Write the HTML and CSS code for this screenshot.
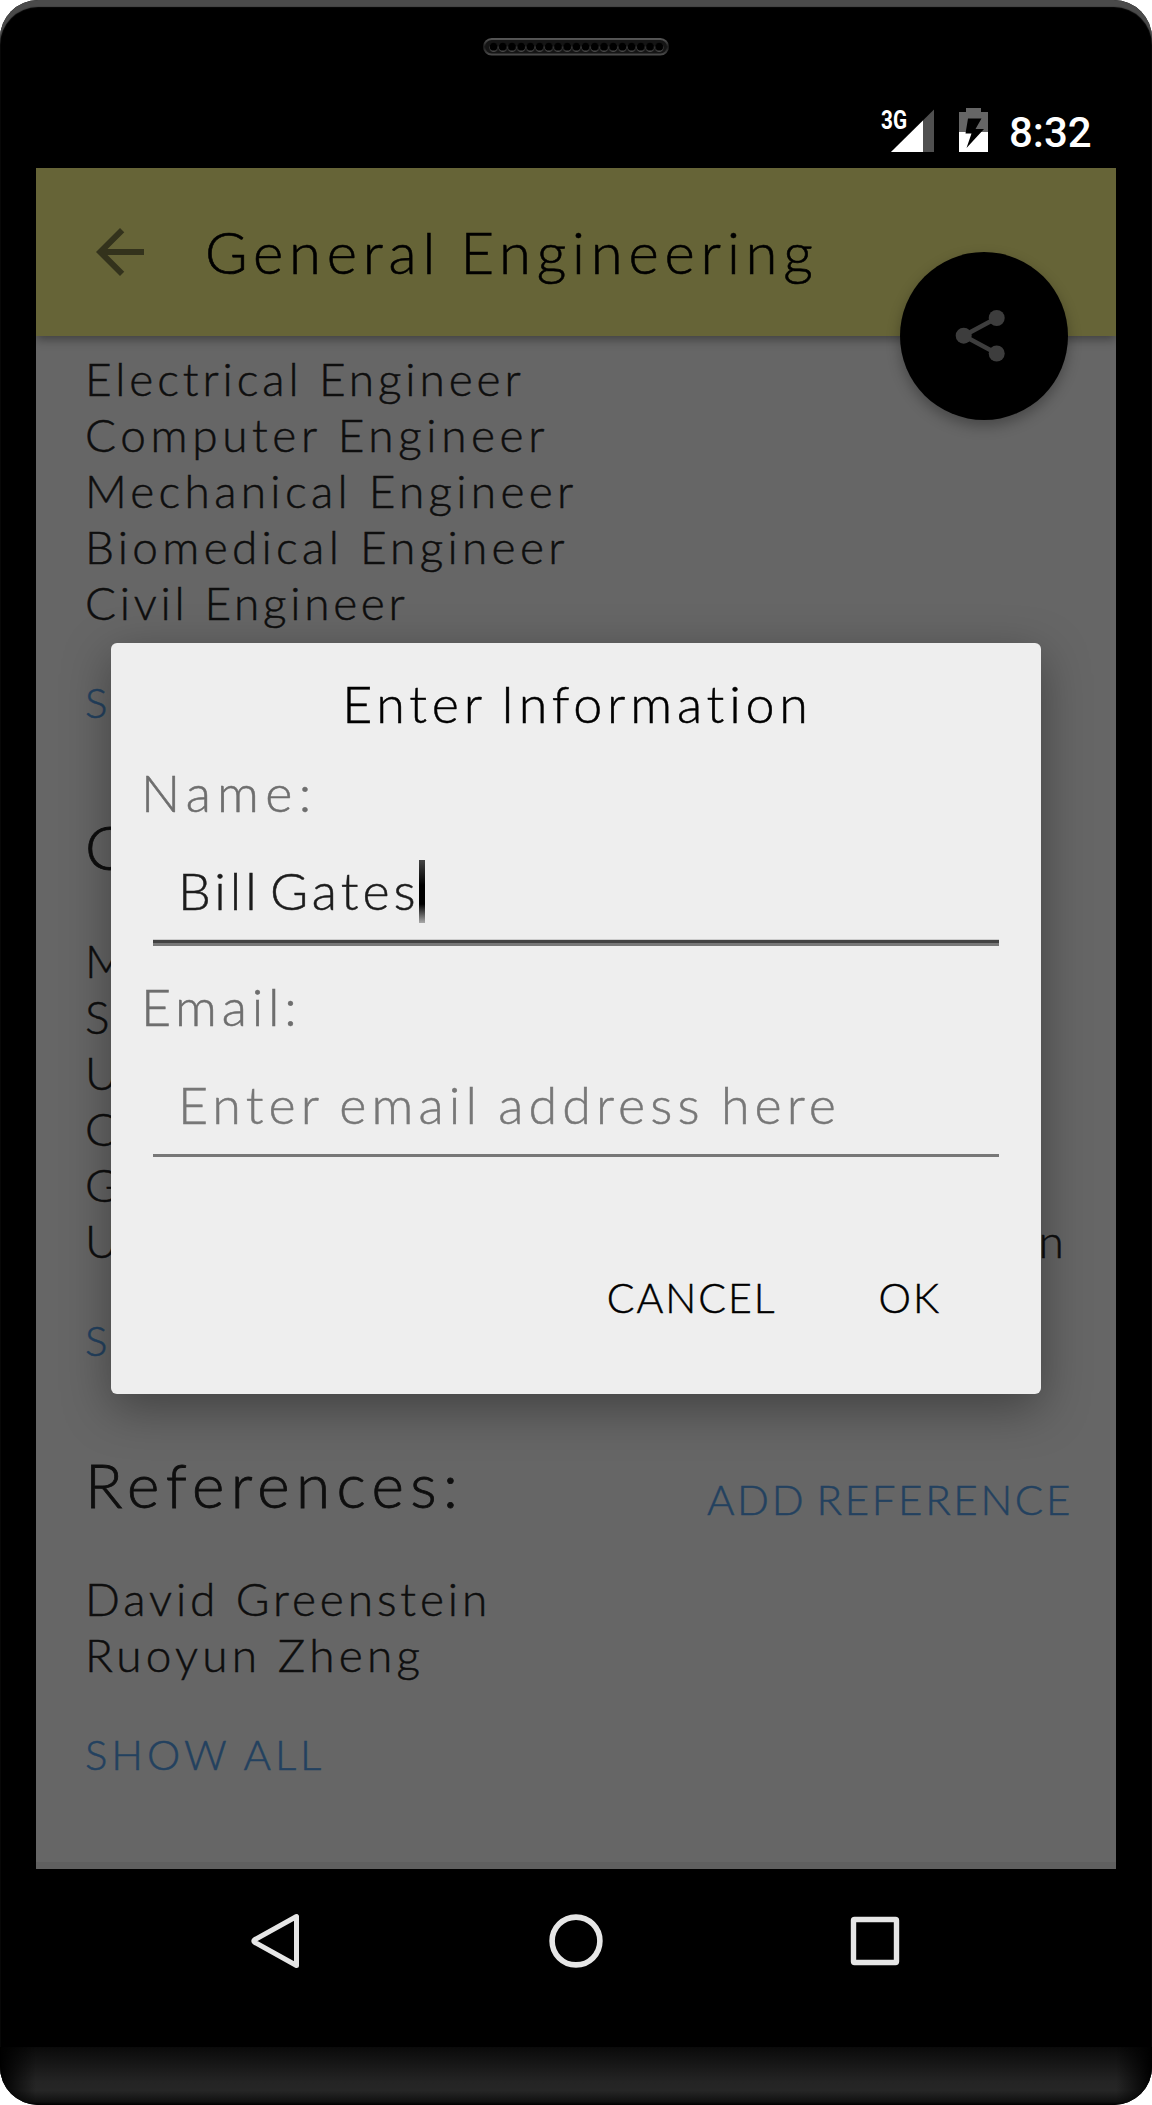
FILE: index.html
```html
<!DOCTYPE html>
<html lang="en">
<head>
<meta charset="utf-8">
<title>General Engineering</title>
<link rel="stylesheet" href="styles.css">
</head>
<body>
<div class="phone">
  <div class="earpiece">
    <svg width="186" height="18" viewBox="0 0 186 18">
      <defs>
        <pattern id="holes" x="6" y="0" width="9.2" height="18" patternUnits="userSpaceOnUse">
          <circle cx="4.6" cy="9.6" r="4.3" fill="#484848"/>
          <circle cx="4.6" cy="8.7" r="3.9" fill="#000"/>
        </pattern>
        <linearGradient id="rim" x1="0" y1="0" x2="0" y2="1">
          <stop offset="0" stop-color="#555"/><stop offset=".5" stop-color="#1c1c1c"/><stop offset="1" stop-color="#484848"/>
        </linearGradient>
      </defs>
      <rect x="1" y="1" width="184" height="15.5" rx="7.7" fill="#151515" stroke="url(#rim)" stroke-width="2"/>
      <rect x="6" y="0" width="174.8" height="18" fill="url(#holes)"/>
    </svg>
  </div>
  <div class="screen">
    <div class="status">
      <svg class="signal" width="56" height="48" viewBox="0 0 56 48">
        <path d="M13 44 56 1.500V44Z" fill="#505050"/>
        <path d="M13 44 45 12.500V44Z" fill="#fff"/>
        <text x="3" y="20.500" class="net" textLength="26" lengthAdjust="spacingAndGlyphs">3G</text>
      </svg>
      <svg class="battery" width="29" height="44" viewBox="0 0 29 44">
        <path d="M0 4H7V0H22V4H29V24H0Z" fill="#666"/>
        <path d="M0 24H29V44H0Z" fill="#fff"/>
        <path d="M9 10.500H22.500L16.500 21H25L7.500 40 12.500 25.500H6.500Z" fill="#000"/>
      </svg>
      <span class="clock">8:32</span>
    </div>
    <header class="appbar">
      <svg width="72" height="72" viewBox="0 0 24 24"><path d="M20 11H7.830l5.590-5.590L12 4l-8 8 8 8 1.410-1.410L7.830 13H20z" fill="#33321c"/></svg>
      <h1 class="title">General Engineering</h1>
      <div class="fab">
        <svg width="60" height="60" viewBox="0 0 60 60" fill="#3d3d3d">
          <path d="M9.700 29.700 42.700 12M9.700 29.700 42.700 47.500" stroke="#3d3d3d" stroke-width="4.500"/>
          <circle cx="9.700" cy="29.700" r="8"/><circle cx="42.700" cy="12" r="8"/><circle cx="42.700" cy="47.500" r="8"/>
        </svg>
      </div>
    </header>
    <main class="content">
      <section class="section">
        <ul class="list">
          <li class="electrical">Electrical Engineer</li>
          <li class="computer">Computer Engineer</li>
          <li class="mechanical">Mechanical Engineer</li>
          <li class="mechanical">Biomedical Engineer</li>
          <li class="civil">Civil Engineer</li>
        </ul>
        <div class="link">SHOW ALL</div>
      </section>
      <section class="section">
        <div class="head"><h2>C</h2></div>
        <ul class="list">
          <li>M</li>
          <li>S</li>
          <li>U</li>
          <li>C</li>
          <li>G</li>
          <li class="split"><span>U</span><span>n</span></li>
        </ul>
        <div class="link">SHOW ALL</div>
      </section>
      <section class="section">
        <div class="head"><h2>References:</h2><span class="link add">ADD REFERENCE</span></div>
        <ul class="list">
          <li class="electrical">David Greenstein</li>
          <li>Ruoyun Zheng</li>
        </ul>
        <div class="link">SHOW ALL</div>
      </section>
    </main>
  </div>
  <nav class="nav">
    <svg width="54" height="60" viewBox="0 0 54 60"><path d="M48.500 5.500V54.500L7 31.500Q4.500 30 7 28.500Z" fill="none" stroke="#e6e6e6" stroke-width="5" stroke-linejoin="round"/></svg>
    <svg width="54" height="54" viewBox="0 0 54 54"><circle cx="27" cy="27" r="23.900" fill="none" stroke="#e6e6e6" stroke-width="5.600"/></svg>
    <svg width="50" height="50" viewBox="0 0 50 50"><rect x="3.500" y="3.500" width="43" height="43" rx="1" fill="none" stroke="#e6e6e6" stroke-width="5.400"/></svg>
  </nav>
  <div class="chin"></div>
  <div class="dialog">
    <h3 class="dtitle">Enter Information</h3>
    <div class="label name">Name:</div>
    <div class="field focus"><span class="value">Bill Gates</span><i class="caret"></i></div>
    <div class="label">Email:</div>
    <div class="field"><span class="hint">Enter email address here</span></div>
    <div class="actions"><span class="cancel">CANCEL</span><span class="ok">OK</span></div>
  </div>
</div>
</body>
</html>
```
FILE: styles.css
```css
* { box-sizing: border-box; margin: 0; padding: 0; }
body { background: #fff; font-family: Lato, "Open Sans", sans-serif; font-weight: 300; }
svg { display: block; flex: none; overflow: visible; }
h1, h2, h3 { font-weight: 300; }
ul { list-style: none; }

.phone {
  position: relative;
  width: 1152px;
  height: 2105px;
  display: flex;
  flex-direction: column;
  align-items: center;
  background: #000;
  border-radius: 38px;
  overflow: hidden;
  box-shadow: inset 0 7px 1px #4a4a4a;
}
.earpiece { height: 84px; padding-top: 38px; }
.screen { width: 1080px; height: 1785px; background: #666; display: flex; flex-direction: column; border-bottom: 7px solid #606060; }

.status { height: 84px; background: #000; display: flex; align-items: flex-start; padding: 24px 0 0 842px; }
.signal { margin-right: 25px; }
.battery { margin-right: 21px; }
.net { font: 700 26px Roboto, sans-serif; fill: #fff; }
.clock { font: 500 42px/50px Roboto, sans-serif; color: #fff; }

.appbar {
  position: relative;
  height: 168px;
  background: #666437;
  display: flex;
  align-items: center;
  padding-left: 48px;
  box-shadow: 0 3px 10px rgba(0, 0, 0, .4);
  clip-path: inset(0 0 -130px 0);
}
.title { font-size: 58px; line-height: 70px; margin-left: 49px; letter-spacing: 5.8px; word-spacing: -2px; color: #000; white-space: nowrap; -webkit-text-stroke: .6px #000; }
.fab {
  position: absolute;
  right: 48px;
  bottom: -84px;
  width: 168px;
  height: 168px;
  border-radius: 50%;
  background: #000;
  box-shadow: 0 6px 14px rgba(0, 0, 0, .3);
  padding: 54px 0 0 54px;
}

.content { padding: 15px 43px 0 49px; color: #0e0e0e; -webkit-text-stroke: .5px; }
.section + .section { margin-top: 78px; }
.head { display: flex; justify-content: space-between; align-items: flex-end; height: 76px; margin-bottom: 49px; }
.head h2 { font-size: 62px; line-height: 76px; letter-spacing: 6.4px; -webkit-text-stroke-width: .8px; }
.list { font-size: 46px; line-height: 56px; letter-spacing: 4.2px; white-space: nowrap; }
.electrical { letter-spacing: 3.9px; }
.computer { letter-spacing: 4.6px; }
.mechanical { letter-spacing: 4.3px; }
.civil { letter-spacing: 3.7px; }
.link { margin-top: 43px; font-size: 42px; line-height: 56px; letter-spacing: 3.9px; color: #23415f; white-space: nowrap; }
.head .add { margin: 0 0 -5px; letter-spacing: 2.7px; word-spacing: -4px; }
.split { display: flex; justify-content: space-between; padding-right: 5px; }

.nav { width: 652px; height: 144px; margin-right: 4px; display: flex; align-items: center; justify-content: space-between; }
.chin {
  width: 1152px;
  flex: 1;
  margin-top: 34px;
  background:
    linear-gradient(90deg, #000, transparent 36px, transparent 1116px, #000),
    linear-gradient(#0a0a0a, #242424 60%, #262626 75%, #111 94%, #000);
}

.dialog {
  position: absolute;
  left: 111px;
  top: 643px;
  width: 930px;
  height: 751px;
  border-radius: 6px;
  background: #eee;
  box-shadow: 0 14px 48px rgba(0, 0, 0, .36);
  display: flex;
  flex-direction: column;
  padding: 28px 42px 0;
  font-size: 52px;
  line-height: 64px;
  color: #000;
  white-space: nowrap;
  -webkit-text-stroke: .5px;
}
.dtitle { font-size: 52px; text-align: center; letter-spacing: 4.8px; word-spacing: -4px; padding-left: 3px; }
.label { margin: 25px 0 0 -12px; color: #6e6e6e; letter-spacing: 4.8px; }
.name { letter-spacing: 6.3px; }
.field { height: 119px; padding: 34px 0 0 25px; display: flex; border-bottom: 3px solid #777; margin-bottom: 3px; }
.value { color: #1c1c1c; letter-spacing: 4px; word-spacing: -9px; }
.hint { color: #777; letter-spacing: 5.1px; word-spacing: -3px; }
.caret { width: 6px; height: 63px; margin: 2px 0 0 -1px; background: linear-gradient(#444, #000 40%, #000 70%, #aaa); }
.focus {
  height: 122px;
  border: 0;
  background: linear-gradient(#ccc 1px, #424242 1px 4px, #777 4px) bottom / 100% 7px no-repeat;
}
.actions { display: flex; font-size: 41px; line-height: 50px; margin-top: 113px; justify-content: flex-end; padding-right: 58px; letter-spacing: 2px; }
.cancel { margin-right: 102px; }
```
